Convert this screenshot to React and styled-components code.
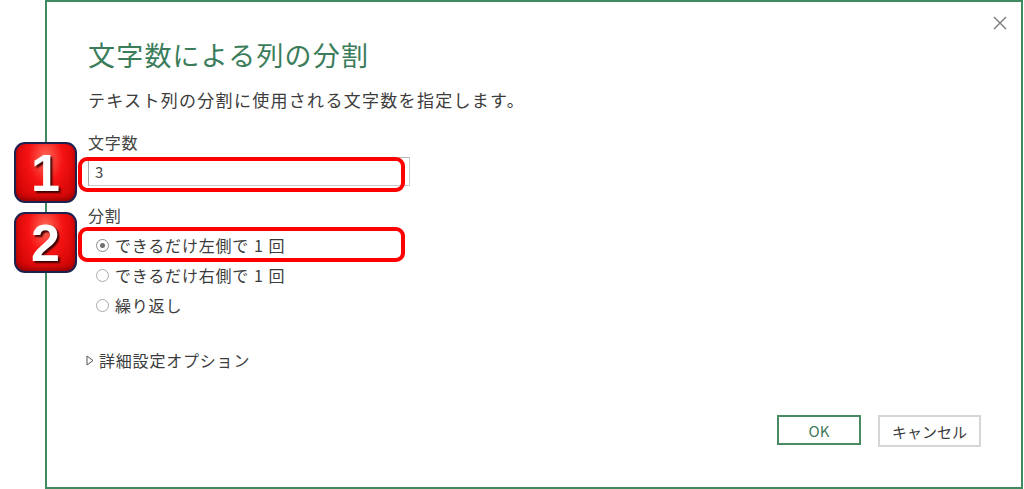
import React from 'react';
import styled, { createGlobalStyle } from 'styled-components';

const GlobalStyle = createGlobalStyle`
  html, body {
    margin: 0;
    padding: 0;
    background: #fff;
  }
  body {
    font-family: "Noto Sans CJK JP", "Noto Sans", sans-serif;
    color: #3a3a3a;
  }
`;

const Page = styled.div`
  position: relative;
  width: 1024px;
  height: 489px;
  display: flex;
  overflow: hidden;
`;

const Dialog = styled.div`
  position: relative;
  box-sizing: border-box;
  margin-left: 45px;
  width: 978px;
  height: 489px;
  border: 2px solid #3f8a5f;
  padding: 37px 40px 0 41px;
  display: flex;
  flex-direction: column;
  align-items: flex-start;
`;

const CloseButton = styled.button`
  position: absolute;
  top: 12px;
  right: 12px;
  width: 18px;
  height: 18px;
  padding: 0;
  border: none;
  background: none;
  color: #7a7a7a;
  display: flex;
  align-items: center;
  justify-content: center;
`;

const Title = styled.h1`
  margin: 0;
  font-size: 27px;
  font-weight: 400;
  line-height: 32px;
  letter-spacing: 1.2px;
  color: #3b7d5b;
`;

const Subtitle = styled.p`
  margin: 17px 0 0;
  font-size: 17px;
  line-height: 24px;
  letter-spacing: 1.3px;
  color: #3c3c3c;
`;

const Label = styled.div`
  margin-top: ${(p) => p.$gap}px;
  font-size: 16px;
  line-height: 22px;
  letter-spacing: 0.7px;
  color: #444;
`;

const TextInput = styled.div`
  box-sizing: border-box;
  margin-top: 4px;
  width: 322px;
  height: 29px;
  border: 1px solid #cacaca;
  border-left-color: #a8a8a8;
  border-top-color: #b8b8b8;
  padding-left: 6px;
  font-size: 15px;
  line-height: 27px;
  color: #444;
`;

const RadioList = styled.div`
  margin-top: 4px;
  display: flex;
  flex-direction: column;
`;

const RadioRow = styled.label`
  display: flex;
  align-items: center;
  gap: 6px;
  height: 30px;
  padding-left: 8px;
  font-size: 16px;
  letter-spacing: 0.8px;
  word-spacing: 0.5px;
  color: #3c3c3c;
`;

const RadioDot = styled.span`
  box-sizing: border-box;
  width: 13px;
  height: 13px;
  border-radius: 50%;
  border: 1px solid ${(p) => (p.$checked ? '#8a8a8a' : '#a9a9a9')};
  display: flex;
  align-items: center;
  justify-content: center;
  &::after {
    content: '';
    width: 5px;
    height: 5px;
    border-radius: 50%;
    background: ${(p) => (p.$checked ? '#6f6f6f' : 'transparent')};
  }
`;

const Advanced = styled.div`
  margin-top: 29px;
  display: flex;
  align-items: center;
  gap: 5px;
  height: 22px;
  font-size: 16px;
  letter-spacing: 0.8px;
  color: #3c3c3c;
  margin-left: -2px;
`;

const Footer = styled.div`
  align-self: stretch;
  margin-top: 44px;
  display: flex;
  justify-content: flex-end;
  gap: 17px;
`;

const Button = styled.button`
  box-sizing: border-box;
  height: ${(p) => (p.$primary ? 30 : 32)}px;
  width: ${(p) => (p.$primary ? 84 : 103)}px;
  background: #fff;
  border: 2px solid ${(p) => (p.$primary ? '#4a8a62' : '#d6d6d6')};
  font-family: "Noto Sans CJK JP", "Noto Sans", sans-serif;
  font-size: 15px;
  color: ${(p) => (p.$primary ? '#3f7a5a' : '#3c3c3c')};
  padding: 0;
`;

const Badge = styled.div`
  position: absolute;
  left: 14px;
  top: ${(p) => p.$top}px;
  box-sizing: border-box;
  width: 63px;
  height: 61px;
  border: 2px solid #1d2150;
  border-radius: 11px;
  background: radial-gradient(ellipse at 50% 25%, #ff6a5a 0%, #f51212 42%, #c20000 100%);
  box-shadow: inset 0 -3px 4px rgba(90, 0, 0, 0.45);
  display: flex;
  align-items: center;
  justify-content: center;
  font-family: "Liberation Sans", Arial, sans-serif;
  font-weight: 700;
  font-size: 52px;
  line-height: 1;
  color: #fff;
  text-shadow: 2px 2px 2px #3a0000;
`;

const Highlight = styled.div`
  position: absolute;
  left: 78px;
  top: ${(p) => p.$top}px;
  box-sizing: border-box;
  width: 327px;
  height: 35px;
  border: 4px solid #ff0000;
  border-radius: 9px;
`;

const radios = [
  { label: 'できるだけ左側で 1 回', checked: true },
  { label: 'できるだけ右側で 1 回', checked: false },
  { label: '繰り返し', checked: false },
];

export default function App() {
  return (
    <Page>
      <GlobalStyle />
      <Dialog>
        <CloseButton aria-label="閉じる">
          <svg width="16" height="16" viewBox="0 0 16 16">
            <path d="M2 2 L14 14 M14 2 L2 14" stroke="currentColor" strokeWidth="1.4" fill="none" />
          </svg>
        </CloseButton>
        <Title>文字数による列の分割</Title>
        <Subtitle>テキスト列の分割に使用される文字数を指定します。</Subtitle>
        <Label $gap={19}>文字数</Label>
        <TextInput>3</TextInput>
        <Label $gap={18}>分割</Label>
        <RadioList>
          {radios.map((r) => (
            <RadioRow key={r.label}>
              <RadioDot $checked={r.checked} />
              {r.label}
            </RadioRow>
          ))}
        </RadioList>
        <Advanced>
          <svg width="8" height="11" viewBox="0 0 8 11">
            <path d="M1 1 L7 5.5 L1 10 Z" stroke="#555" strokeWidth="1" fill="none" />
          </svg>
          詳細設定オプション
        </Advanced>
        <Footer>
          <Button $primary>OK</Button>
          <Button>キャンセル</Button>
        </Footer>
      </Dialog>
      <Highlight $top={157} />
      <Highlight $top={227} />
      <Badge $top={142}>1</Badge>
      <Badge $top={212}>2</Badge>
    </Page>
  );
}
